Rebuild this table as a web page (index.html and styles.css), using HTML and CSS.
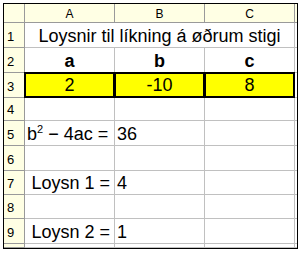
FILE: index.html
```html
<!DOCTYPE html>
<html>
<head>
<meta charset="utf-8">
<link rel="stylesheet" href="styles.css">
</head>
<body>
<div class="frame">
  <div class="sheet">
    <div class="corner"></div>
    <div class="colhead">A</div>
    <div class="colhead">B</div>
    <div class="colhead">C</div>
    <div class="colhead stub"></div>

    <div class="rowhead">1</div>
    <div class="cell title">Loysnir til líkning á øðrum stigi</div>
    <div class="cell stub"></div>

    <div class="rowhead">2</div>
    <div class="cell bold center">a</div>
    <div class="cell bold center">b</div>
    <div class="cell bold center">c</div>
    <div class="cell stub"></div>

    <div class="rowhead">3</div>
    <div class="cell yellow center">2</div>
    <div class="cell yellow center">-10</div>
    <div class="cell yellow center">8</div>
    <div class="cell stub"></div>

    <div class="rowhead">4</div>
    <div class="cell"></div>
    <div class="cell"></div>
    <div class="cell"></div>
    <div class="cell stub"></div>

    <div class="rowhead">5</div>
    <div class="cell left"><span>b<sup>2</sup> − 4ac =</span></div>
    <div class="cell">36</div>
    <div class="cell"></div>
    <div class="cell stub"></div>

    <div class="rowhead">6</div>
    <div class="cell"></div>
    <div class="cell"></div>
    <div class="cell"></div>
    <div class="cell stub"></div>

    <div class="rowhead">7</div>
    <div class="cell right">Loysn 1 =</div>
    <div class="cell">4</div>
    <div class="cell"></div>
    <div class="cell stub"></div>

    <div class="rowhead">8</div>
    <div class="cell"></div>
    <div class="cell"></div>
    <div class="cell"></div>
    <div class="cell stub"></div>

    <div class="rowhead">9</div>
    <div class="cell right">Loysn 2 =</div>
    <div class="cell">1</div>
    <div class="cell"></div>
    <div class="cell stub"></div>

    <div class="rowhead"></div>
    <div class="cell"></div>
    <div class="cell"></div>
    <div class="cell"></div>
    <div class="cell stub"></div>
  </div>
</div>
</body>
</html>
```
FILE: styles.css
```css
html, body {
  margin: 0;
  padding: 0;
  background: #ffffff;
}
body {
  padding: 3px 0 0 3px;
  font-family: "Liberation Sans", Arial, sans-serif;
}
.frame {
  width: 293px;
  height: 244px;
  border: 1px solid #000;
  overflow: hidden;
}
.sheet {
  display: grid;
  grid-template-columns: 21px 90px 90px 90px 2px;
  grid-template-rows: 19px 25px 25px 25px 23px 25px 25px 24px 24px 25px 4px;
}
.corner,
.colhead,
.rowhead {
  background: #ffffe4;
  border-right: 1px solid #9a9a9a;
  border-bottom: 1px solid #9a9a9a;
  color: #000;
}
.colhead {
  display: flex;
  align-items: center;
  justify-content: center;
  font-size: 12px;
  padding-top: 1px;
}
.rowhead {
  display: flex;
  align-items: flex-end;
  padding: 0 0 3px 3px;
  font-size: 13px;
}
.colhead.stub { border-right: none; }
.cell {
  border-right: 1px solid #c0c0c0;
  border-bottom: 1px solid #c0c0c0;
  font-size: 18px;
  line-height: 20px;
  display: flex;
  align-items: flex-end;
  padding: 0 2px 1px 2px;
  white-space: nowrap;
}
.cell.stub { border-right: none; padding: 0; }
.title {
  grid-column: span 3;
  justify-content: center;
}
.center { justify-content: center; }
.left { padding-left: 2px; }
.right { justify-content: flex-end; padding-right: 4px; }
.bold { font-weight: bold; }
.yellow {
  background: #ffff00;
  border: 2px solid #000;
  margin: -1px 0 0 -1px;
}
sup {
  font-size: 11px;
  vertical-align: 7px;
  line-height: 0;
}
```
